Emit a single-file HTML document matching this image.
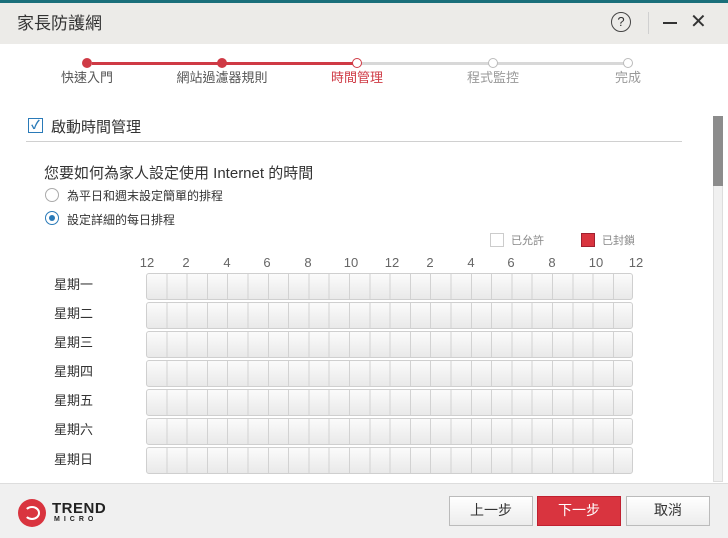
<!DOCTYPE html>
<html><head><meta charset="utf-8"><style>
*{margin:0;padding:0;box-sizing:border-box}
body{width:728px;height:538px;overflow:hidden;background:#fff;font-family:"Liberation Sans","Noto Sans CJK TC",sans-serif;position:relative;color:#333}
.abs{position:absolute}
.title{left:0;top:0;width:728px;height:44px;background:#ecebe8;border-top:3px solid #1a6f7a}
.grid{position:absolute;left:146px;width:487px;height:27px;border:1px solid #cfcfcf;border-radius:3px;
background:repeating-linear-gradient(to right,transparent 0 19.3px,#d2d2d2 19.3px 20.3px),linear-gradient(#fbfbfb,#e9e9e9)}
.day{position:absolute;left:54px;font-size:13px;color:#333}
.hr{position:absolute;top:255px;font-size:13px;color:#666;transform:translateX(-50%)}
.step{position:absolute;top:67px;font-size:13px;transform:translateX(-50%);white-space:nowrap}
.dot{position:absolute;top:58px;width:10px;height:10px;border-radius:50%}
.btn{position:absolute;top:496px;height:30px;width:84px;border:1px solid #bbb;background:linear-gradient(#fff,#ececec);font-size:14px;text-align:center;line-height:27px;color:#333}
</style></head><body>
<div class="abs title"></div>
<div class="abs" style="left:17px;top:9px;font-size:17px;color:#333">家長防護網</div>
<div class="abs" style="left:611px;top:12px;width:20px;height:20px;border:1.5px solid #444;border-radius:50%;font-size:13px;text-align:center;line-height:17px;color:#333">?</div>
<div class="abs" style="left:648px;top:12px;width:1px;height:22px;background:#d0d0d0"></div>
<div class="abs" style="left:663px;top:22px;width:14px;height:2px;background:#333"></div>
<div class="abs" style="left:690px;top:9px;font-size:20px;color:#333">✕</div>
<div class="abs" style="left:92px;top:62px;width:262px;height:3px;background:#cf3a45"></div>
<div class="abs" style="left:360px;top:62px;width:265px;height:3px;background:#d8d8d8"></div>
<div class="dot" style="left:82px;background:#cf3a45"></div>
<div class="dot" style="left:217px;background:#cf3a45"></div>
<div class="dot" style="left:352px;border:1.5px solid #cf3a45;background:#fff"></div>
<div class="dot" style="left:488px;border:1.5px solid #bbb;background:#fff"></div>
<div class="dot" style="left:623px;border:1.5px solid #bbb;background:#fff"></div>
<div class="step" style="left:87px;color:#555">快速入門</div>
<div class="step" style="left:222px;color:#555">網站過濾器規則</div>
<div class="step" style="left:357px;color:#cf3a45">時間管理</div>
<div class="step" style="left:493px;color:#999">程式監控</div>
<div class="step" style="left:628px;color:#999">完成</div>
<div class="abs" style="left:28px;top:118px;width:15px;height:15px;border:1.5px solid #2a7ab8;color:#2a7ab8;font-size:12px;line-height:12px;text-align:center;font-weight:bold">✓</div>
<div class="abs" style="left:51px;top:116px;font-size:15px;color:#333">啟動時間管理</div>
<div class="abs" style="left:26px;top:141px;width:656px;height:1px;background:#d0d0d0"></div>
<div class="abs" style="left:44px;top:162px;font-size:15px;color:#333">您要如何為家人設定使用 Internet 的時間</div>
<div class="abs" style="left:45px;top:188px;width:14px;height:14px;border:1px solid #aaa;border-radius:50%"></div>
<div class="abs" style="left:67px;top:187px;font-size:12px">為平日和週末設定簡單的排程</div>
<div class="abs" style="left:45px;top:211px;width:14px;height:14px;border:1px solid #2a7ab8;border-radius:50%"><div style="margin:3px;width:6px;height:6px;border-radius:50%;background:#2a7ab8"></div></div>
<div class="abs" style="left:67px;top:211px;font-size:12px">設定詳細的每日排程</div>
<div class="abs" style="left:490px;top:233px;width:14px;height:14px;border:1px solid #ccc"></div>
<div class="abs" style="left:511px;top:232px;font-size:11px;color:#888">已允許</div>
<div class="abs" style="left:581px;top:233px;width:14px;height:14px;border:1px solid #a02030;background:#d9343f"></div>
<div class="abs" style="left:602px;top:232px;font-size:11px;color:#888">已封鎖</div>
<div class="hr" style="left:147px">12</div><div class="hr" style="left:186px">2</div><div class="hr" style="left:227px">4</div><div class="hr" style="left:267px">6</div><div class="hr" style="left:308px">8</div><div class="hr" style="left:351px">10</div><div class="hr" style="left:392px">12</div><div class="hr" style="left:430px">2</div><div class="hr" style="left:471px">4</div><div class="hr" style="left:511px">6</div><div class="hr" style="left:552px">8</div><div class="hr" style="left:596px">10</div><div class="hr" style="left:636px">12</div>
<div class="day" style="top:274px">星期一</div><div class="grid" style="top:273px"></div>
<div class="day" style="top:303px">星期二</div><div class="grid" style="top:302px"></div>
<div class="day" style="top:332px">星期三</div><div class="grid" style="top:331px"></div>
<div class="day" style="top:361px">星期四</div><div class="grid" style="top:360px"></div>
<div class="day" style="top:390px">星期五</div><div class="grid" style="top:389px"></div>
<div class="day" style="top:419px">星期六</div><div class="grid" style="top:418px"></div>
<div class="day" style="top:449px">星期日</div><div class="grid" style="top:447px"></div>
<div class="abs" style="left:713px;top:116px;width:10px;height:366px;background:#f0f0f0;border:1px solid #ddd"></div>
<div class="abs" style="left:713px;top:116px;width:10px;height:70px;background:#8c8c8c"></div>
<div class="abs" style="left:0;top:483px;width:728px;height:55px;background:#f0f0f0;border-top:1px solid #ddd"></div>
<div class="abs" style="left:18px;top:499px;width:28px;height:28px;border-radius:50%;background:#d9343f"></div>
<div class="abs" style="left:24px;top:506px;width:16px;height:14px;border:2px solid #fff;border-radius:50%;border-left-color:transparent"></div>
<div class="abs" style="left:52px;top:500px;font-size:15px;font-weight:bold;color:#222;letter-spacing:0.5px">TREND</div>
<div class="abs" style="left:54px;top:516px;font-size:7px;font-weight:bold;color:#222;letter-spacing:4px">MICRO</div>
<div class="btn" style="left:449px">上一步</div>
<div class="btn" style="left:537px;background:#d9343f;border-color:#c02030;color:#fff">下一步</div>
<div class="btn" style="left:626px">取消</div>
</body></html>
